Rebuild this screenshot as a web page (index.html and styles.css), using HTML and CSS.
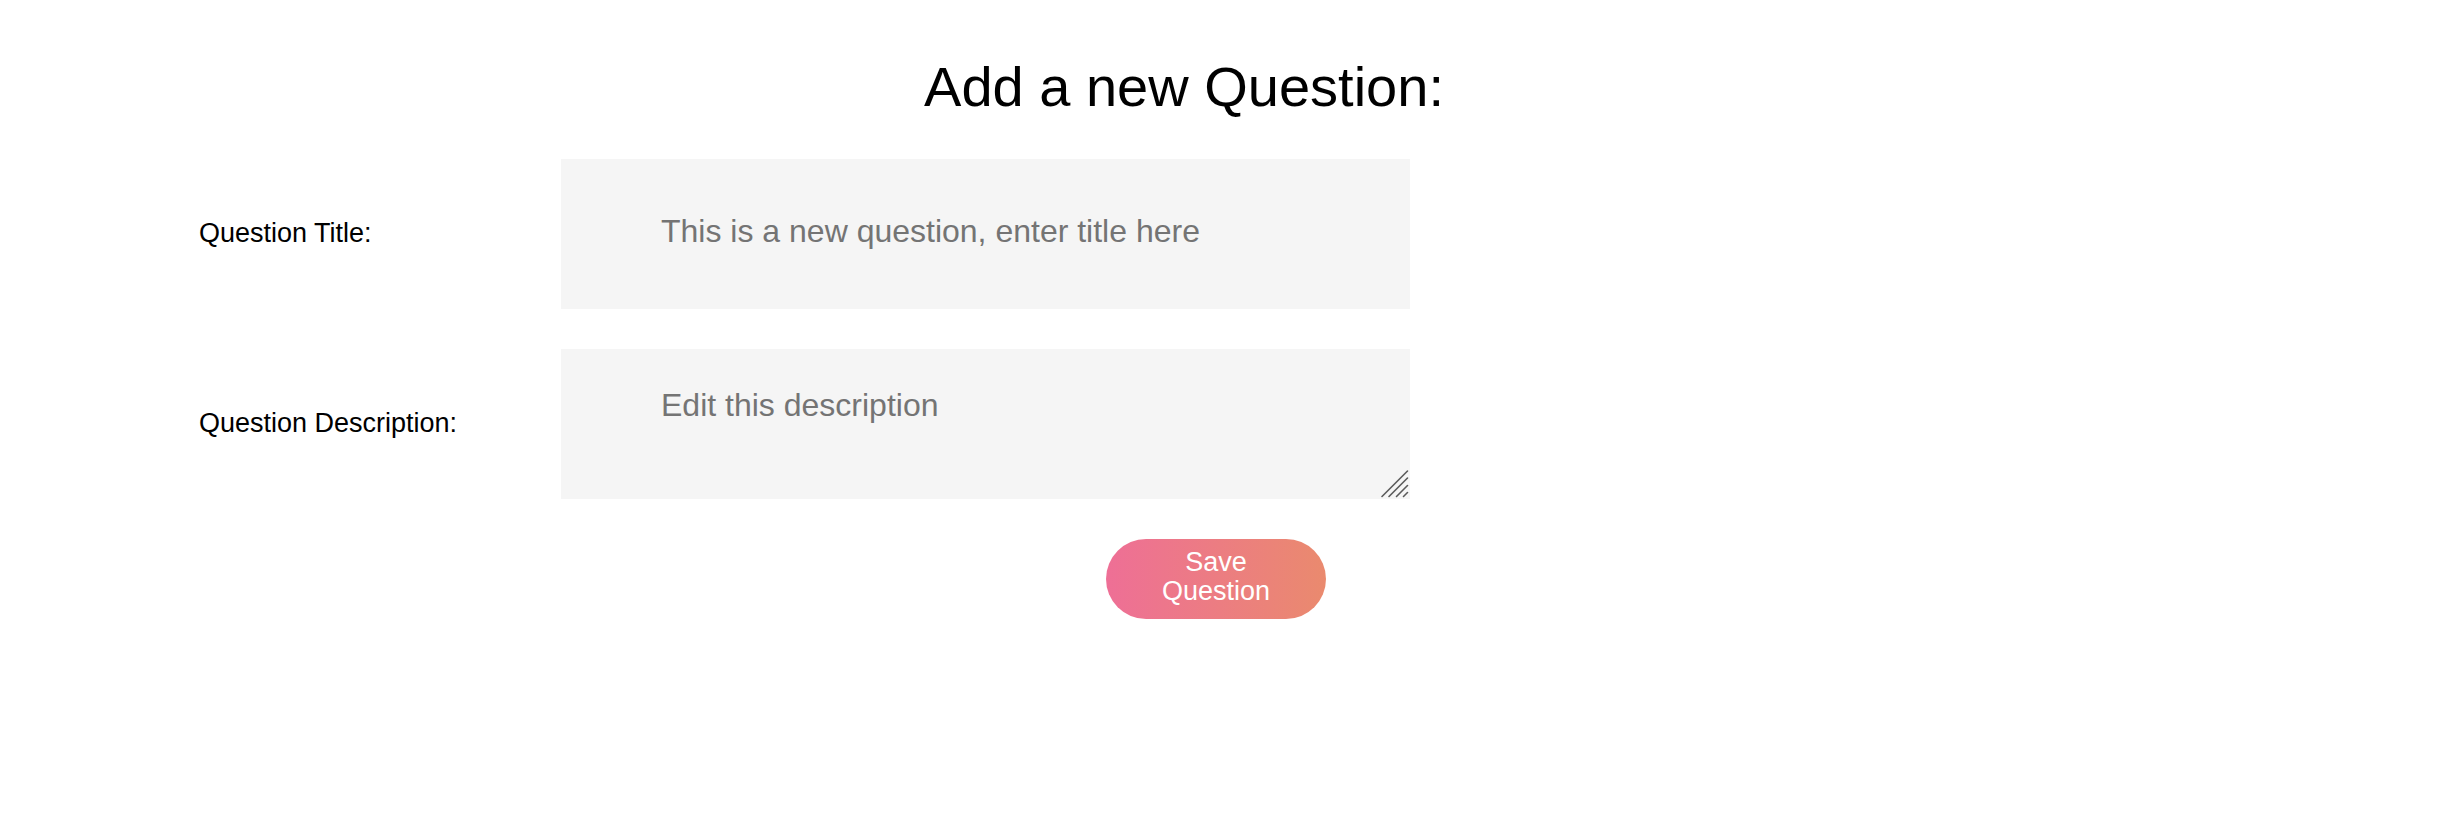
FILE: index.html
```html
<!DOCTYPE html>
<html lang="en">
<head>
<meta charset="utf-8">
<title>Add a new Question</title>
<link rel="stylesheet" href="styles.css">
</head>
<body>
<div class="page">
  <h1 class="page-title">Add a new Question:</h1>
  <form class="question-form">
    <label class="field-label" for="qtitle">Question Title:</label>
    <input class="field-input" id="qtitle" type="text" placeholder="This is a new question, enter title here">
    <label class="field-label" for="qdesc">Question Description:</label>
    <div class="textarea-wrap">
      <textarea class="field-textarea" id="qdesc" placeholder="Edit this description"></textarea>
      <svg class="resize-grip" width="30" height="30" viewBox="0 0 30 30" aria-hidden="true">
        <rect x="0" y="0" width="30" height="30" fill="#f5f5f5"/>
        <g stroke="#5a5a5a" stroke-width="1.6" stroke-linecap="round">
          <line x1="2" y1="27.5" x2="27.5" y2="2"/>
          <line x1="9" y1="27.5" x2="27.5" y2="9"/>
          <line x1="16.5" y1="27.5" x2="27.5" y2="16.5"/>
          <line x1="23.5" y1="27.5" x2="27.5" y2="23.5"/>
        </g>
      </svg>
    </div>
    <div class="actions">
      <button class="save-btn" type="button">Save Question</button>
    </div>
  </form>
</div>
</body>
</html>
```

FILE: styles.css
```css
html, body {
  margin: 0;
  padding: 0;
  background: #ffffff;
}

body {
  font-family: "Liberation Sans", Arial, Helvetica, sans-serif;
  color: #000000;
}

.page {
  padding-top: 55px;
}

.page-title {
  margin: 0 76px 40px 0;
  font-size: 56px;
  line-height: 64px;
  font-weight: normal;
  text-align: center;
}

.question-form {
  display: grid;
  grid-template-columns: 362px 849px;
  row-gap: 40px;
  padding-left: 199px;
  align-items: center;
}

.field-label {
  font-size: 27px;
  line-height: 31px;
  padding-bottom: 2px;
}

.field-input,
.field-textarea {
  box-sizing: border-box;
  width: 849px;
  height: 150px;
  margin: 0;
  border: none;
  border-radius: 0;
  outline: none;
  background: #f5f5f5;
  font-family: "Liberation Sans", Arial, Helvetica, sans-serif;
  font-size: 32px;
  color: #000000;
}

.field-input {
  padding: 0 100px 6px;
}

.textarea-wrap {
  position: relative;
  width: 849px;
  height: 150px;
}

.field-textarea {
  padding: 38px 100px 20px;
  line-height: normal;
  display: block;
}

.resize-grip {
  position: absolute;
  right: 0;
  bottom: 0;
  pointer-events: none;
  display: block;
}

.field-input::placeholder,
.field-textarea::placeholder {
  color: #747474;
  opacity: 1;
}

.actions {
  grid-column: 2;
  display: flex;
  padding-left: 545px;
}

.save-btn {
  box-sizing: border-box;
  width: 220px;
  height: 80px;
  padding: 0 40px 5px;
  border: none;
  border-radius: 40px;
  background: linear-gradient(to right, #ee6f96, #ea8a6e);
  color: #ffffff;
  font-family: "Liberation Sans", Arial, Helvetica, sans-serif;
  font-size: 27px;
  line-height: 29px;
  cursor: pointer;
}
```
